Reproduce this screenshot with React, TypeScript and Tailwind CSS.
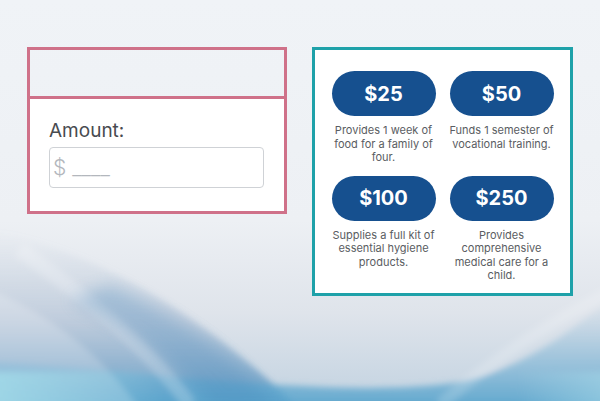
import React from "react";

type Tier = { amount: string; text: string };

const tiers: Tier[] = [
  { amount: "$25", text: "Provides 1 week of food for a family of four." },
  { amount: "$50", text: "Funds 1 semester of vocational training." },
  { amount: "$100", text: "Supplies a full kit of essential hygiene products." },
  { amount: "$250", text: "Provides comprehensive medical care for a child." },
];

// soft blue swooshes along the bottom of the page
function WaveBackdrop() {
  return (
    <svg className="absolute inset-0 h-full w-full" viewBox="0 0 600 401" preserveAspectRatio="none">
      <defs>
        <linearGradient id="base" x1="0" y1="0" x2="0" y2="1">
          <stop offset="0" stopColor="#f0f3f7" />
          <stop offset="0.55" stopColor="#edf0f4" />
          <stop offset="0.78" stopColor="#dfe4eb" />
          <stop offset="1" stopColor="#c3d3e1" />
        </linearGradient>
        <linearGradient id="swoop" x1="0" y1="0" x2="0" y2="1">
          <stop offset="0" stopColor="#a9bbd0" stopOpacity="0" />
          <stop offset="0.5" stopColor="#93abc8" stopOpacity="0.4" />
          <stop offset="1" stopColor="#4a90c0" stopOpacity="0.85" />
        </linearGradient>
        <linearGradient id="bowl" x1="0" y1="0" x2="0" y2="1">
          <stop offset="0" stopColor="#8fb9d6" stopOpacity="0" />
          <stop offset="0.55" stopColor="#74b0d3" stopOpacity="0.55" />
          <stop offset="1" stopColor="#55a3cc" stopOpacity="0.95" />
        </linearGradient>
        <linearGradient id="edge" x1="0" y1="0" x2="1" y2="0">
          <stop offset="0" stopColor="#a4dce9" stopOpacity="0.85" />
          <stop offset="0.28" stopColor="#a4dce9" stopOpacity="0" />
          <stop offset="0.85" stopColor="#a6d8e8" stopOpacity="0" />
          <stop offset="1" stopColor="#a6d8e8" stopOpacity="0.6" />
        </linearGradient>
        <filter id="soft">
          <feGaussianBlur stdDeviation="3" />
        </filter>
        <filter id="haze">
          <feGaussianBlur stdDeviation="8" />
        </filter>
      </defs>
      <rect width="600" height="401" fill="url(#base)" />
      <g filter="url(#soft)">
        <path d="M-10,230 C100,252 210,320 300,410 L-10,410 Z" fill="url(#swoop)" />
        <path d="M-10,362 C160,372 340,400 460,382 C520,370 570,332 610,300 L610,410 L-10,410 Z" fill="url(#bowl)" />
        <path d="M-10,290 C60,320 110,365 140,410 L-10,410 Z" fill="#ffffff" opacity="0.2" />
        <path d="M20,250 C90,300 150,350 190,405" stroke="#ffffff" strokeOpacity="0.22" strokeWidth="14" fill="none" />
        <path d="M440,405 C490,362 545,325 610,292" stroke="#ffffff" strokeOpacity="0.18" strokeWidth="12" fill="none" />
        <rect x="-10" y="372" width="620" height="40" fill="url(#edge)" />
      </g>
      <path
        d="M110,285 C180,315 240,360 280,410 L215,410 C180,365 130,330 70,300 Z"
        fill="#3f83b8"
        opacity="0.28"
        filter="url(#haze)"
      />
    </svg>
  );
}

export default function App() {
  return (
    <div className="relative h-[401px] w-[600px] overflow-hidden font-['Inter',sans-serif]">
      <WaveBackdrop />

      <div className="relative flex items-start gap-[25px] pl-[27px] pt-[47px]">
        {/* amount entry card */}
        <div className="w-[260px] border-[3px] border-[#cf7189]">
          <div className="h-[49px] border-b-[3px] border-[#cf7189]" />
          <div className="bg-white px-[19px] pb-[23px] pt-[20px]">
            <p className="text-[19px] leading-[23px] text-[#484b50]">Amount:</p>
            <div className="mt-[5px] flex h-[41px] w-[215px] items-center rounded-[4px] border border-[#cfd2d6] bg-white px-[3px]">
              <span className="text-[21px] font-light text-[#b3b7bd]">$ ____</span>
            </div>
          </div>
        </div>

        {/* suggested gift tiers */}
        <div className="w-[261px] border-[3px] border-[#1ea1a9] bg-white px-[16px] pb-[10px] pt-[21px]">
          <div className="grid grid-cols-2 gap-x-[13px] gap-y-[11px]">
            {tiers.map((t) => (
              <div key={t.amount} className="flex flex-col items-center">
                <div className="flex h-[45px] w-[104px] items-center justify-center rounded-full bg-[#16508f] text-[20px] font-bold text-white">
                  {t.amount}
                </div>
                <p className="mt-[8px] text-center text-[11px] leading-[13.5px] text-[#5a5d62]">{t.text}</p>
              </div>
            ))}
          </div>
        </div>
      </div>
    </div>
  );
}
